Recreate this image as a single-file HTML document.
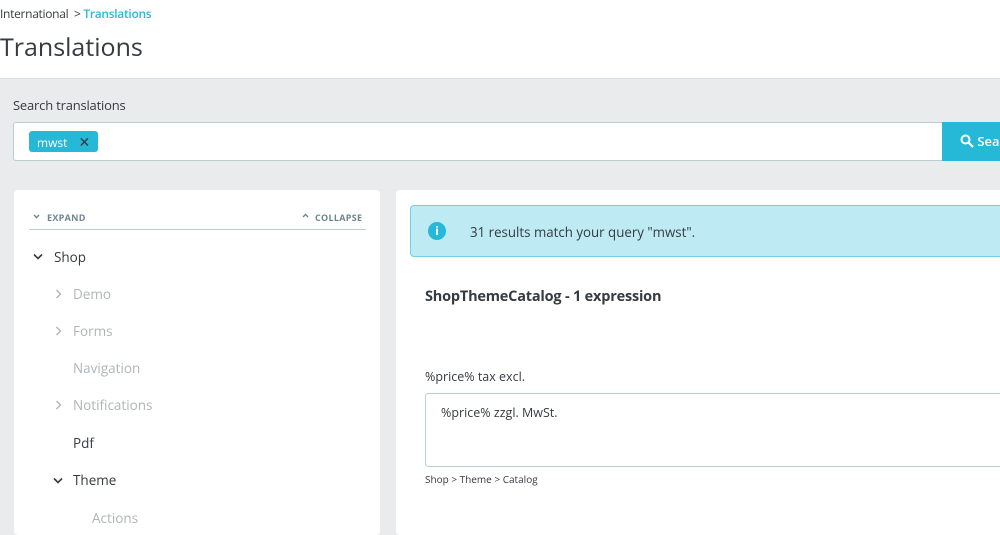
<!DOCTYPE html>
<html><head><style>
*{margin:0;padding:0;box-sizing:border-box}
body{width:1000px;height:531px;overflow:hidden;background:#eaebec;font-family:"Open Sans","DejaVu Sans","Liberation Sans",sans-serif;color:#363a41;position:relative}
.abs{position:absolute}
svg.c{position:absolute}
</style></head><body>
<div class="abs" style="left:0;top:0;width:1000px;height:79px;background:#fff;border-bottom:1px solid #dbe1e5"></div>
<div class="abs" style="left:0;top:5px;font-size:12px;color:#363a41;letter-spacing:-0.3px">International &nbsp;&gt; <span style="color:#25b9d7;font-weight:600">Translations</span></div>
<div class="abs" style="left:0;top:30px;font-size:25px;color:#363a41;letter-spacing:0px">Translations</div>
<div class="abs" style="left:13px;top:96px;font-size:13px;letter-spacing:-0.2px">Search translations</div>
<div class="abs" style="left:13px;top:122px;width:930px;height:39px;background:#fff;border:1px solid #bbcdd2;border-radius:3px 0 0 3px"></div>
<div class="abs" style="left:29px;top:131px;width:69px;height:21px;background:#25b9d7;border-radius:3px;color:#fff;font-size:12px;padding:2px 0 0 8px">mwst <span style="margin-left:8px;font-size:14px;color:#363a41">✕</span></div>
<div class="abs" style="left:942px;top:122px;width:58px;height:39px;background:#25b9d7;color:#fff;font-size:13px;font-weight:600;padding:10px 0 0 18px;white-space:nowrap">
<svg width="14" height="14" viewBox="0 0 14 14" style="vertical-align:-2px"><circle cx="5.5" cy="5.5" r="4" fill="none" stroke="#fff" stroke-width="2"/><path d="M8.5 8.5L13 13" stroke="#fff" stroke-width="2.2"/></svg> Sea</div>
<div class="abs" style="left:14px;top:190px;width:366px;height:345px;background:#fff;border-radius:4px"></div>
<svg class="c" style="left:33px;top:214px" width="7" height="5" viewBox="0 0 7 5"><path d="M1 1l2.5 2.5L6 1" fill="none" stroke="#6c868e" stroke-width="1.4"/></svg>
<div class="abs" style="left:47px;top:211px;font-size:9px;font-weight:700;color:#6c868e;letter-spacing:0.3px">EXPAND</div>
<svg class="c" style="left:302px;top:213px" width="7" height="5" viewBox="0 0 7 5"><path d="M1 4l2.5-2.5L6 4" fill="none" stroke="#6c868e" stroke-width="1.4"/></svg>
<div class="abs" style="left:315px;top:211px;font-size:9px;font-weight:700;color:#6c868e;letter-spacing:0.3px">COLLAPSE</div>
<div class="abs" style="left:29px;top:229px;width:337px;height:1px;background:#bbcdd2"></div>
<svg class="c" style="left:33px;top:253px" width="10" height="7" viewBox="0 0 10 7"><path d="M1 1.5l4 4 4-4" fill="none" stroke="#363a41" stroke-width="1.6"/></svg>
<div class="abs" style="left:54px;top:248px;font-size:13.5px;color:#363a41">Shop</div>
<svg class="c" style="left:55px;top:289px" width="7" height="10" viewBox="0 0 7 10"><path d="M1.5 1l4 4-4 4" fill="none" stroke="#b0b4b8" stroke-width="1.4"/></svg>
<div class="abs" style="left:73px;top:285px;font-size:13.5px;color:#b0b4b8">Demo</div>
<svg class="c" style="left:55px;top:326px" width="7" height="10" viewBox="0 0 7 10"><path d="M1.5 1l4 4-4 4" fill="none" stroke="#b0b4b8" stroke-width="1.4"/></svg>
<div class="abs" style="left:73px;top:322px;font-size:13.5px;color:#b0b4b8">Forms</div>
<div class="abs" style="left:73px;top:359px;font-size:13.5px;color:#b0b4b8">Navigation</div>
<svg class="c" style="left:55px;top:400px" width="7" height="10" viewBox="0 0 7 10"><path d="M1.5 1l4 4-4 4" fill="none" stroke="#b0b4b8" stroke-width="1.4"/></svg>
<div class="abs" style="left:73px;top:396px;font-size:13.5px;color:#b0b4b8">Notifications</div>
<div class="abs" style="left:73px;top:434px;font-size:13.5px;color:#363a41">Pdf</div>
<svg class="c" style="left:53px;top:477px" width="10" height="7" viewBox="0 0 10 7"><path d="M1 1.5l4 4 4-4" fill="none" stroke="#363a41" stroke-width="1.6"/></svg>
<div class="abs" style="left:73px;top:471px;font-size:13.5px;color:#363a41">Theme</div>
<div class="abs" style="left:92px;top:509px;font-size:13.5px;color:#b0b4b8">Actions</div>
<div class="abs" style="left:396px;top:190px;width:610px;height:345px;background:#fff;border-radius:4px"></div>
<div class="abs" style="left:410px;top:205px;width:600px;height:52px;background:#beeaf3;border:1px solid #6fcfe3;border-radius:4px"></div>
<div class="abs" style="left:428px;top:222px;width:18px;height:18px;border-radius:50%;background:#25b9d7;color:#fff;font-size:12px;font-weight:700;text-align:center;line-height:18px">i</div>
<div class="abs" style="left:470px;top:223px;font-size:13.3px;color:#363a41">31 results match your query "mwst".</div>
<div class="abs" style="left:425px;top:287px;font-size:14.5px;font-weight:700;color:#363a41;letter-spacing:-0.2px">ShopThemeCatalog - 1 expression</div>
<div class="abs" style="left:425px;top:368px;font-size:12.5px;color:#363a41">%price% tax excl.</div>
<div class="abs" style="left:425px;top:393px;width:590px;height:74px;border:1px solid #bbcdd2;border-radius:3px;padding:10px 0 0 15px;font-size:12.5px">%price% zzgl. MwSt.</div>
<div class="abs" style="left:425px;top:472px;font-size:10px;color:#363a41">Shop &gt; Theme &gt; Catalog</div>
</body></html>
